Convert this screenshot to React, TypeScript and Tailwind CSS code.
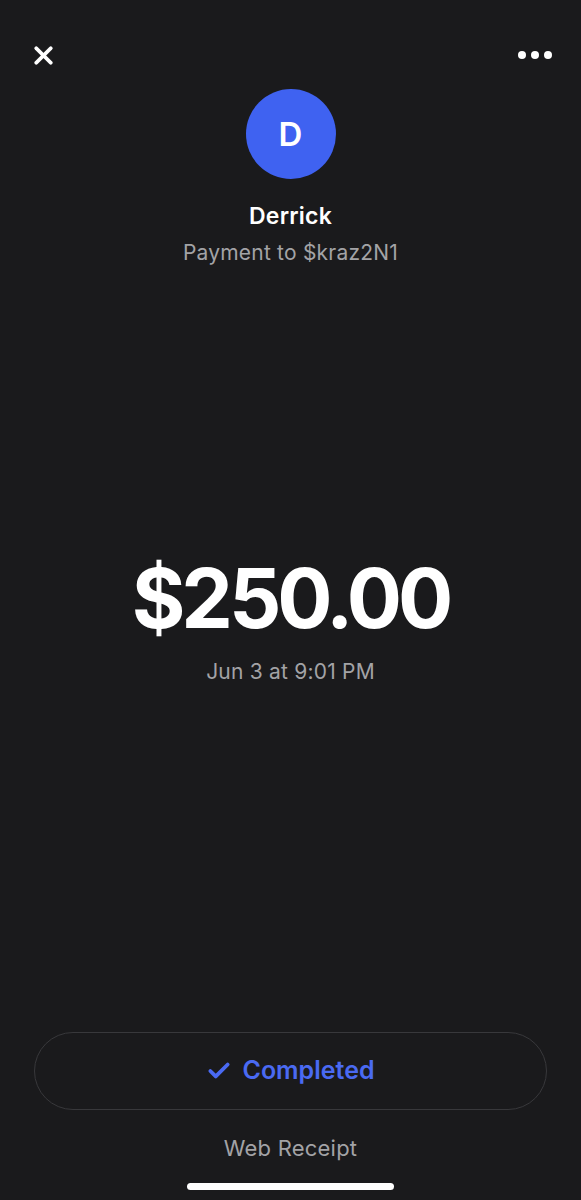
import { Check, X } from 'lucide-react'

const font = { fontFamily: 'Inter, "Noto Sans", sans-serif' }

export default function App() {
	return (
		<div className="flex h-[1200px] w-[581px] flex-col bg-[#1a1a1c] text-white" style={font}>
			{/* top bar */}
			<div className="flex h-[24px] items-center justify-between pl-[32px] pr-[29px] mt-[43px]">
				<X size={29} strokeWidth={3.2} className="-ml-[3px] text-white" />
				<div className="flex gap-[5px]">
					<span className="size-[8px] rounded-full bg-white" />
					<span className="size-[8px] rounded-full bg-white" />
					<span className="size-[8px] rounded-full bg-white" />
				</div>
			</div>

			{/* recipient */}
			<div className="mt-[22px] flex flex-col items-center">
				<div className="flex size-[90px] items-center justify-center rounded-full bg-[#3f62f1]">
					<span className="text-[33px] font-semibold leading-none">D</span>
				</div>
				<h1 className="mt-[23px] text-[23px] font-semibold leading-[28px] tracking-[0.01em]">Derrick</h1>
				<p className="mt-[10px] text-[21px] leading-[26px] tracking-[0.01em] text-[#a3a3a6]">Payment to $kraz2N1</p>
			</div>

			{/* amount */}
			<div className="mt-[292px] flex flex-col items-center">
				<div className="text-[82px] font-bold leading-none tracking-[-0.05em]">$250.00</div>
				<div className="mt-[19px] text-[21px] leading-[26px] tracking-[0.01em] text-[#a3a3a6]">Jun 3 at 9:01 PM</div>
			</div>

			<div className="flex-1" />

			{/* footer */}
			<button className="mx-[34px] flex h-[78px] items-center justify-center gap-[10px] rounded-full border border-[#38383b] text-[#4a6af2]">
				<Check size={26} strokeWidth={3.5} />
				<span className="text-[25px] font-semibold">Completed</span>
			</button>
			<p className="mt-[25px] text-center text-[22px] leading-[27px] tracking-[0.01em] text-[#a3a3a6]">Web Receipt</p>
			<div className="mx-auto mb-[10px] mt-[21px] h-[7px] w-[207px] rounded-full bg-white" />
		</div>
	)
}
